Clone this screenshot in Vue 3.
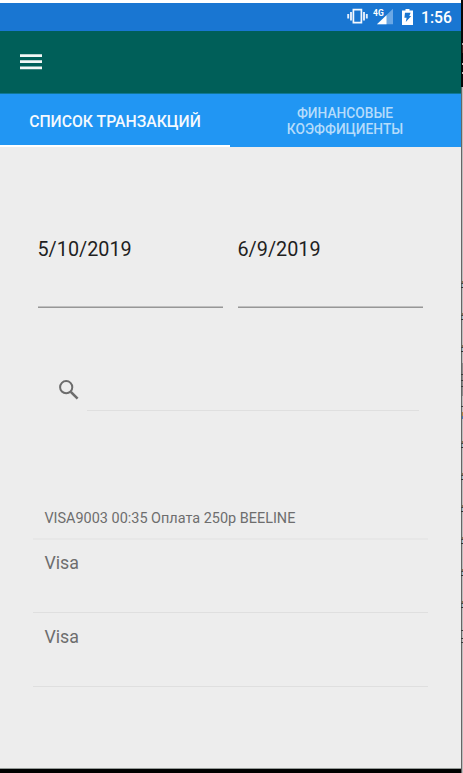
<script setup>
const transactions = [
  { text: 'VISA9003 00:35 Оплата 250р BEELINE', kind: 'small' },
  { text: 'Visa', kind: 'large' },
  { text: 'Visa', kind: 'large' },
]
const dates = ['5/10/2019', '6/9/2019']
const marks = [281, 313, 345, 441, 473, 505, 537, 569, 601]
const ticks = [374, 380, 386, 406, 630, 638, 642]
</script>

<template>
  <div class="window">
    <div class="screen">
      <div class="statusbar">
        <svg class="vibrate" width="21" height="16" viewBox="0 0 21 16">
          <path d="M6.4 1.6h8v13h-8z" fill="none" stroke="#f4f8fd" stroke-width="1.7" />
          <path d="M4 4v8.4M1.2 6v4.4M17 4v8.4M19.8 6v4.4" stroke="#e4effc" stroke-width="1.9" />
        </svg>
        <svg class="signal" width="20" height="17" viewBox="0 0 20 17">
          <path d="M20 .8v15.5H4z" fill="#6ba8e5" />
          <path d="M13.5 7.2v9.1H4z" fill="#fff" />
          <text x="0" y="7.6" class="network">4G</text>
        </svg>
        <svg class="battery" width="11" height="16" viewBox="0 0 11 16">
          <path d="M3.5 0h4v1.6H11V16H0V1.6h3.5z" fill="#fff" />
          <path d="M3 3.8h5.6L7.3 7.1h1.9L3.8 13l.8-4.2H2.4z" fill="#1976d2" />
        </svg>
        <span class="clock">1:56</span>
      </div>
      <header class="toolbar">
        <svg width="22" height="16" viewBox="0 0 22 16">
          <path d="M0 1.7h22M0 7.7h22M0 13.8h22" stroke="#f3f7f6" stroke-width="2.7" />
        </svg>
      </header>
      <nav class="tabs">
        <div class="tab active"><span>СПИСОК ТРАНЗАКЦИЙ</span></div>
        <div class="tab double"><span>ФИНАНСОВЫЕ<br>КОЭФФИЦИЕНТЫ</span></div>
      </nav>
      <main class="content">
        <div class="dates">
          <div v-for="d in dates" :key="d" class="date">{{ d }}</div>
        </div>
        <div class="search">
          <svg width="20" height="20" viewBox="0 0 20 20">
            <circle cx="7.2" cy="7.2" r="6.1" fill="none" stroke="#6c6c6c" stroke-width="2" />
            <path d="M11.8 11.8l6.8 6.8" stroke="#6c6c6c" stroke-width="2.6" />
          </svg>
          <div class="field"></div>
        </div>
        <div class="list">
          <div v-for="(t, i) in transactions" :key="i" class="row" :class="t.kind">{{ t.text }}</div>
        </div>
      </main>
      <div class="bottom"></div>
    </div>
    <svg class="edge" width="2" height="773" viewBox="0 0 2 773" shape-rendering="crispEdges">
      <rect width="2" height="773" fill="#bdbdbd" />
      <rect width="1" height="773" fill="#666" />
      <rect width="2" height="87" fill="#080808" />
      <rect x="1" y="43" width="1" height="2" fill="#aaa" />
      <rect x="1" y="45" width="1" height="8" fill="#3b211b" />
      <rect x="1" y="63" width="1" height="2" fill="#bbb" />
      <rect x="1" y="72" width="1" height="2" fill="#bbb" />
      <rect x="1" y="363" width="1" height="33" fill="#8c8c8c" />
      <rect x="1" y="412" width="1" height="4" fill="#b08345" />
      <rect x="1" y="416" width="1" height="3" fill="#4c79b5" />
      <g v-for="m in marks" :key="m">
        <rect x="1" :y="m" width="1" height="2" fill="#8a7355" />
        <rect x="0" :y="m + 2" width="2" height="1" fill="#45464a" />
        <rect x="1" :y="m + 3" width="1" height="3" fill="#9ebdca" />
        <rect x="0" :y="m + 6" width="2" height="1" fill="#333" />
      </g>
      <rect v-for="t in ticks" :key="t" x="0" :y="t" width="2" height="1" fill="#3c3c3c" />
    </svg>
  </div>
</template>

<style>
body {
  margin: 0;
  background: #fff;
}
</style>

<style scoped>
.window {
  display: flex;
  width: 463px;
  height: 773px;
  overflow: hidden;
  font-family: Roboto, "Liberation Sans", sans-serif;
}
.screen {
  width: 461px;
  height: 773px;
  box-sizing: border-box;
  padding-top: 3px;
  display: flex;
  flex-direction: column;
  background: #fff;
}
.edge {
  display: block;
  flex: none;
}
.statusbar {
  height: 28px;
  flex: none;
  box-sizing: border-box;
  background: #1976d2;
  display: flex;
  justify-content: flex-end;
  align-items: flex-start;
  padding: 5px 9px 0 0;
  color: #fff;
}
.signal {
  margin-left: 5px;
}
.network {
  font-size: 8.5px;
  font-weight: 700;
  fill: #fff;
}
.battery {
  margin: 1px 0 0 9px;
}
.clock {
  width: 31px;
  margin-left: 8px;
  font-size: 15.7px;
  font-weight: 500;
  line-height: 19px;
}
.toolbar {
  height: 63px;
  flex: none;
  box-sizing: border-box;
  background: #005f59;
  border-bottom: 1px solid #0f7896;
  padding: 23px 0 0 20px;
}
.toolbar svg {
  display: block;
}
.tabs {
  height: 53px;
  flex: none;
  display: flex;
  background: #2196f3;
}
.tab {
  width: 230px;
  box-sizing: border-box;
  text-align: center;
  color: #f4f9fe;
  font-size: 15.75px;
  font-weight: 500;
  line-height: 55px;
  white-space: nowrap;
}
.tab.active {
  border-bottom: 2px solid #fff;
}
.tab.double {
  color: #b5dcfb;
  font-size: 13.75px;
  line-height: 16px;
  padding-top: 11px;
}
.content {
  flex: 1;
  background: #ededed;
}
.dates {
  display: flex;
  gap: 15px;
  padding: 89px 0 0 37.5px;
}
.date {
  width: 185px;
  height: 72px;
  box-sizing: border-box;
  border-bottom: 1px solid #979797;
  box-shadow: inset 0 -1px #c0c0c0;
  font-size: 19.8px;
  line-height: 28px;
  color: #1f1f1f;
}
.search {
  display: flex;
  align-items: flex-start;
  padding: 72px 0 0 59px;
}
.field {
  width: 332px;
  height: 30px;
  margin-left: 8px;
  border-bottom: 1px solid #dfdfdf;
}
.list {
  width: 395px;
  margin: 88px 0 0 33px;
}
.row {
  box-sizing: border-box;
  padding-left: 11.4px;
  color: #6d6d6d;
  border-bottom: 1px solid #dfdfdf;
}
.row.small {
  height: 41px;
  font-size: 14.45px;
  line-height: 40px;
  border-bottom: 2px solid #e7e7e7;
}
.row.large {
  height: 74px;
  font-size: 17.8px;
  line-height: 48px;
}
.row.small + .row.large {
  height: 73px;
  line-height: 46px;
}
.bottom {
  height: 5px;
  flex: none;
  box-sizing: border-box;
  background: #000;
  border-top: 1px solid #959b98;
}
</style>
